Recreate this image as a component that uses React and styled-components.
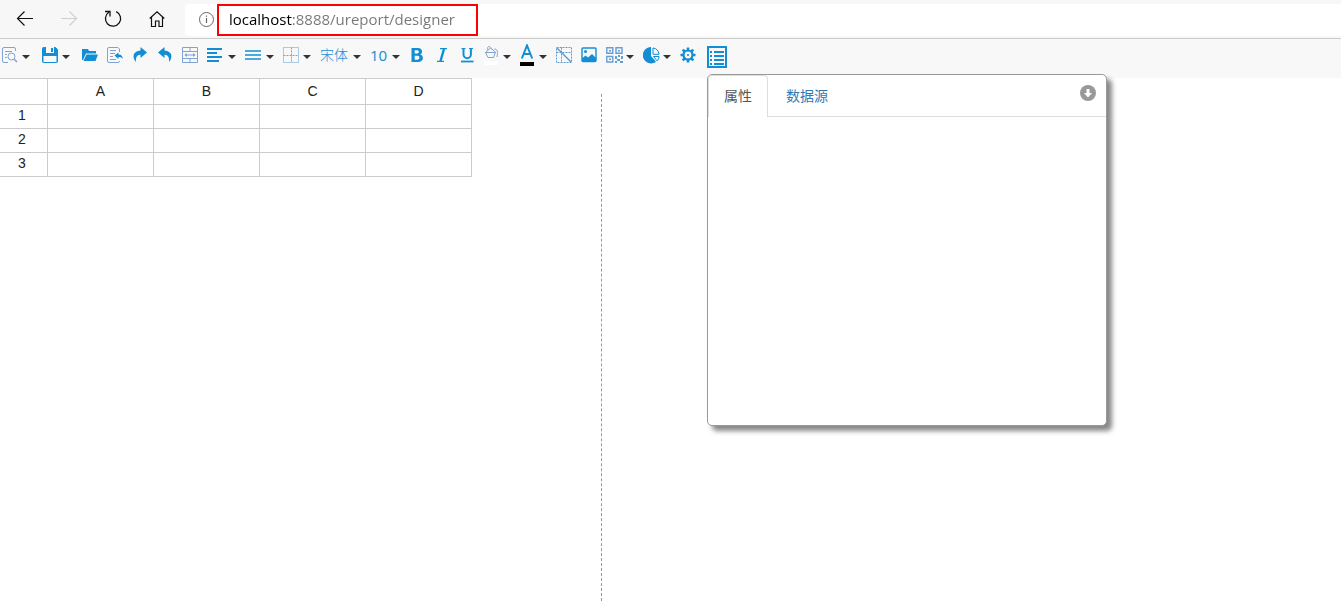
import styled, { createGlobalStyle } from "styled-components";

const blue = "#118ed4";
const pale = "#7ea3d4";
const line = "#cccccc";

const GlobalStyle = createGlobalStyle`
  * {
    box-sizing: border-box;
  }
  body {
    margin: 0;
    background: #fff;
    color: #333;
    font: 14px/20px "Liberation Sans", "Noto Sans CJK SC", sans-serif;
  }
  button, input {
    font: inherit;
    color: inherit;
    border: 0;
    padding: 0;
    background: none;
  }
  button {
    cursor: pointer;
  }
  svg {
    display: block;
  }
`;

const Page = styled.div`
  display: flex;
  flex-direction: column;
  min-height: 100vh;
`;

const BrowserBar = styled.header`
  display: flex;
  align-items: center;
  padding: 4px 0 2px;
  background: #f7f7f7;
  border-bottom: 1px solid ${line};
`;
const NavButtons = styled.nav`
  display: flex;
  gap: 24px;
  padding: 0 18px 2px 15px;
`;
const NavButton = styled.button`
  width: 20px;
  height: 20px;
  color: ${(props) => (props.disabled ? "#cfcfcf" : "#111")};
`;
const AddressBar = styled.div`
  flex: 1;
  display: flex;
  align-items: center;
  height: 32px;
  padding-left: 13px;
  background: #fff;
  border-radius: 4px 0 0 4px;
`;
const InfoButton = styled.button`
  width: 17px;
  height: 17px;
  margin-bottom: 2px;
  color: #666;
`;
const AddressInput = styled.input`
  width: 261px;
  height: 32px;
  margin-left: 2px;
  padding: 0 12px 2px;
  font: 15px/22px "Open Sans", sans-serif;
  outline: 2px solid #f00;
  outline-offset: -2px;
  color: transparent;
  caret-color: #111;
  background: linear-gradient(90deg, #000 75px, #767676 75px);
  background-clip: text;
`;

const Toolbar = styled.div`
  display: flex;
  align-items: flex-start;
  gap: 9px;
  padding: 7px 2px 10px;
  background: #f8f8f8;
`;
const Tool = styled.button`
  flex: none;
  display: flex;
  align-items: center;
  justify-content: center;
  gap: ${(props) => props.$gap || 5}px;
  height: 18px;
  margin-right: ${(props) => (props.$wide ? 3 : 0)}px;
  color: ${blue};
  font-weight: 300;
`;
const PanelToggle = styled(Tool)`
  height: 22px;
  margin-left: 2px;
`;
const Caret = styled.span`
  margin-top: 3px;
  border: 4px solid transparent;
  border-top-color: #333;
  border-bottom: 0;
`;
const FontSize = styled.span`
  width: 17px;
  font: 15px/18px "Open Sans", sans-serif;
`;

const Workspace = styled.main`
  flex: 1;
  display: flex;
  position: relative;
`;
const Paper = styled.section`
  width: 602px;
  display: flex;
  align-items: flex-start;
  justify-content: space-between;
`;
const PageEdge = styled.div`
  align-self: stretch;
  margin-top: 16px;
  border-right: 1px dashed #999;
`;
const Sheet = styled.table`
  width: 472px;
  table-layout: fixed;
  border-collapse: separate;
  border-spacing: 0;
  border-top: 1px solid ${line};
  color: #222;

  th, td {
    height: 24px;
    padding: 0 0 3px;
    border-right: 1px solid ${line};
    border-bottom: 1px solid ${line};
    font-weight: normal;
    line-height: 18px;
  }
  thead th {
    height: 26px;
    padding-bottom: 1px;
  }
  thead th:first-child {
    width: 48px;
  }
  tbody th {
    padding-right: 3px;
  }
`;

const Panel = styled.aside`
  position: absolute;
  z-index: 2;
  top: -4px;
  left: 707px;
  width: 400px;
  height: 352px;
  background: #fff;
  border: 1px solid #999;
  border-radius: 5px;
  box-shadow: 5px 5px 5px #888;
`;
const PanelHead = styled.div`
  display: flex;
  align-items: flex-start;
  border-bottom: 1px solid #ddd;
`;
const Tabs = styled.div`
  flex: 1;
  display: flex;
  gap: 2px;
  margin-bottom: -1px;
`;
const Tab = styled.button`
  height: 42px;
  padding: 0 15px 2px;
  line-height: 20px;
  border: 1px solid transparent;
  border-bottom: 0;
  border-radius: 4px 4px 0 0;
  color: #337ab7;

  &[aria-selected="true"] {
    color: #555;
    background: #fff;
    border-color: #ddd;
  }
`;
const Collapse = styled.button`
  width: 16px;
  height: 16px;
  margin: 10px 10px 0 0;
`;

function Icon({ width = 16, height = 16, children, ...rest }) {
  return (
    <svg
      width={width}
      height={height}
      viewBox={`0 0 ${width} ${height}`}
      fill="none"
      stroke="currentColor"
      aria-hidden="true"
      {...rest}
    >
      {children}
    </svg>
  );
}

const icons = {
  back: (
    <Icon width={20} height={20}>
      <path d="M18 9.500H2.500M9.500 2.500l-7 7 7 7" strokeWidth="1.200" />
    </Icon>
  ),
  forward: (
    <Icon width={20} height={20}>
      <path d="M2 9.500h15.500M10.500 2.500l7 7-7 7" strokeWidth="1.200" />
    </Icon>
  ),
  reload: (
    <Icon width={20} height={20}>
      <path d="M13.200 2.700A7.600 7.600 0 1 1 5.800 3.300M2 2.500h5v5" strokeWidth="1.300" />
    </Icon>
  ),
  home: (
    <Icon width={20} height={20}>
      <path d="M2.700 9.500L10 2.700l7.300 6.800M4.500 8v9.500h4v-5.500h3.500v5.500h3.500V8" strokeWidth="1.200" />
    </Icon>
  ),
  info: (
    <Icon width={17} height={17}>
      <circle cx="8.500" cy="8.500" r="7" />
      <path d="M8.500 7v5M8.500 4.500v1.300" strokeWidth="1.200" />
    </Icon>
  ),
  preview: (
    <Icon stroke={pale}>
      <path d="M6 15.500H2A1.500 1.500 0 0 1 .5 14V2A1.500 1.500 0 0 1 2 .5h10A1.500 1.500 0 0 1 13.500 2v2M3 4.500h7M3 7.500h2M3 10.500h2" />
      <circle cx="9.500" cy="9.500" r="3.500" />
      <path d="M12 12l3 3" strokeWidth="1.500" />
    </Icon>
  ),
  save: (
    <Icon>
      <path d="M.5 1.500a1 1 0 0 1 1-1h12l2 2v12a1 1 0 0 1-1 1h-13a1 1 0 0 1-1-1z" fill="currentColor" />
      <path d="M4 0h8v6H4zM1.500 9h13v6h-13z" fill="#f8f8f8" stroke="none" />
      <path d="M9 1h2v4H9z" fill="currentColor" stroke="none" />
    </Icon>
  ),
  open: (
    <Icon fill="currentColor" stroke="none">
      <path d="M0 2h6l1 2h7v2.500H4L1 13H0zM4.500 7.500H16L13.500 14H1.500z" />
    </Icon>
  ),
  load: (
    <Icon stroke={pale}>
      <path d="M12.500 5V2L11 .5H2A1.500 1.500 0 0 0 .5 2v12A1.500 1.500 0 0 0 2 15.500h9a1.500 1.500 0 0 0 1.500-1.500M3 3.500h6M3 6.500h5M3 9.500h3M3 12.500h6" />
      <path d="M7.500 8.500l4-3v2c3 0 4 2 4.500 4.500-1-1.500-2.500-2-4.500-2v2z" fill={blue} stroke="none" />
    </Icon>
  ),
  redo: (
    <Icon fill="currentColor" stroke="none">
      <path d="M8.500 0L15 5.500 8.500 11V7.700C5 7.500 3.500 10.500 4 15 0 10.500.5 4 8.500 3.500z" />
    </Icon>
  ),
  undo: (
    <Icon fill="currentColor" stroke="none">
      <path d="M7.500 0L1 5.500 7.500 11V7.700c3.500-.2 5 2.800 4.500 7.300 4-4.500 3.500-11-4.500-11.500z" />
    </Icon>
  ),
  merge: (
    <Icon stroke={pale}>
      <path d="M.5.500h15v15H.5zM.5 4.500h15M.5 11.500h15M8 .5v4M8 11.500v4M3 8h10" />
      <path d="M5 6L2.500 8 5 10zM11 6l2.500 2-2.500 2z" fill={pale} stroke="none" />
    </Icon>
  ),
  align: (
    <Icon fill="currentColor" stroke="none">
      <path d="M0 1h15v2H0zM0 5h10v2H0zM0 9h15v2H0zM0 13h12v2H0z" />
    </Icon>
  ),
  lines: (
    <Icon>
      <path d="M0 4h16M0 8h16M0 12h16" strokeWidth="1.700" />
    </Icon>
  ),
  border: (
    <Icon stroke="#5b9bd3">
      <path d="M.5.500h15v15H.5z" strokeDasharray="1 1" />
      <path d="M.5 8.500h15M8.500.500v15" stroke={pale} strokeDasharray="2 1" />
    </Icon>
  ),
  bold: (
    <Icon>
      <path
        d="M2.500 1H9c5 0 5 5.500 2.200 6.500 4 1 3.800 7.500-2.200 7.500H2.500zM5.700 3.300v3.200h2.500c2.200 0 2.200-3.200 0-3.200zM5.700 8.800v3.900h2.800c2.500 0 2.500-3.900 0-3.900z"
        fill="currentColor"
        fillRule="evenodd"
        stroke="none"
      />
    </Icon>
  ),
  italic: (
    <Icon>
      <path d="M6 1.700h7M3 14.300h7" strokeWidth="1.300" />
      <path d="M10 2L6.500 14" strokeWidth="2.400" />
    </Icon>
  ),
  underline: (
    <Icon>
      <path d="M4.500 1v6.500a3.700 3.700 0 0 0 7.400 0V1" strokeWidth="2" />
      <path d="M2.500 1.500h4M10 1.500h4" />
      <path d="M2 14.500h12.500" strokeWidth="1.800" />
    </Icon>
  ),
  fill: (
    <Icon width={15} height={22} stroke={pale}>
      <path d="M1.500 8.500l5-4.500 5 4-2 5.500H4zM1.500 8.500h10M4 6C2.500 2 6 1 7.500 5M10.500 5c3 0 3.500 3 2.500 8" />
      <path d="M0 17h14v4H0z" fill="#fff" stroke="none" />
    </Icon>
  ),
  color: (
    <Icon width={14} height={22}>
      <path d="M1.800 14.500L7 1.500l5.200 13M4 10h6" strokeWidth="2" />
      <path d="M0 18h14v4H0z" fill="#000" stroke="none" />
    </Icon>
  ),
  slash: (
    <Icon stroke="#5b9bd3">
      <path d="M.5.500h15v15H.5zM.5 5.500h15M5.500.500v15" strokeDasharray="2 1" />
      <path d="M1 1l14 14" strokeWidth="1.400" />
    </Icon>
  ),
  image: (
    <Icon>
      <rect x="1" y="1" width="14" height="13.500" rx="1" strokeWidth="1.400" />
      <path d="M1 11.500l3.500-3L7 10.500 11 7l4 4v3.500H1z" fill="currentColor" stroke="none" />
      <circle cx="4.500" cy="4.500" r="1.500" fill="currentColor" stroke="none" />
    </Icon>
  ),
  qr: (
    <Icon width={17} height={16} stroke="#689fd3">
      <path d="M.8.800h6v5.500h-6zM10 .8h6v5.500h-6zM.8 9.500h6V15h-6z" strokeWidth="1.400" />
      <path d="M3 3h2v1.500H3zM12 3h2v1.500h-2zM3 11.500h2V13H3zM9 9h2v3H9zM12 8h2v2h-2zM15 9h2v3h-2zM11 12h3v2h-3zM9 14h2v2H9zM14 14h3v2h-3z" fill="#689fd3" stroke="none" />
    </Icon>
  ),
  chart: (
    <Icon width={17} height={17}>
      <path d="M8 0a8.200 8.200 0 1 0 5 14.700L8 9z" fill="currentColor" stroke="none" />
      <path d="M10 1a7 7 0 0 1 6 6.300H10zM10.500 9.500H16c0 1.800-.8 3.300-2 4.300z" strokeWidth="1" />
    </Icon>
  ),
  gear: (
    <Icon>
      <circle cx="8" cy="8" r="4.500" strokeWidth="2.200" />
      <circle cx="8" cy="8" r="1" fill="currentColor" stroke="none" />
      <path d="M8 .5v3M8 12.500v3M.5 8h3M12.500 8h3M2.700 2.700l2 2M11.300 11.300l2 2M2.700 13.300l2-2M11.300 4.700l2-2" strokeWidth="2.600" />
    </Icon>
  ),
  panel: (
    <Icon width={20} height={22}>
      <rect x="1" y="1" width="18" height="20" strokeWidth="2" />
      <path d="M3 6h2M7 6h10M3 10h2M7 10h10M3 14h2M7 14h10M3 18h2M7 18h10" strokeWidth="1.800" />
    </Icon>
  ),
  down: (
    <Icon stroke="none">
      <circle cx="8" cy="8" r="8" fill="#999" />
      <path d="M6.500 4h3v4H12l-4 4.500L4 8h2.500z" fill="#fff" />
    </Icon>
  ),
};

const tools = [
  { label: "预览", icon: icons.preview, menu: true, gap: 4, wide: true },
  { label: "保存", icon: icons.save, menu: true, gap: 4, wide: true },
  { label: "打开", icon: icons.open },
  { label: "导入", icon: icons.load },
  { label: "重做", icon: icons.redo },
  { label: "撤消", icon: icons.undo },
  { label: "合并单元格", icon: icons.merge },
  { label: "对齐方式", icon: icons.align, menu: true },
  { label: "行对齐", icon: icons.lines, menu: true },
  { label: "边框", icon: icons.border, menu: true, gap: 4 },
  { label: "字体", icon: "宋体", menu: true },
  { label: "字号", icon: <FontSize>10</FontSize>, menu: true },
  { label: "加粗", icon: icons.bold },
  { label: "斜体", icon: icons.italic },
  { label: "下划线", icon: icons.underline },
  { label: "背景色", icon: icons.fill, menu: true, gap: 4 },
  { label: "前景色", icon: icons.color, menu: true },
  { label: "斜表头", icon: icons.slash },
  { label: "图片", icon: icons.image },
  { label: "二维码", icon: icons.qr, menu: true, gap: 3 },
  { label: "图表", icon: icons.chart, menu: true, gap: 3 },
  { label: "设置", icon: icons.gear },
];

const columns = ["A", "B", "C", "D"];
const rows = [1, 2, 3];

export default function App() {
  return (
    <Page>
      <GlobalStyle />
      <BrowserBar>
        <NavButtons>
          <NavButton aria-label="Back">{icons.back}</NavButton>
          <NavButton aria-label="Forward" disabled>
            {icons.forward}
          </NavButton>
          <NavButton aria-label="Reload">{icons.reload}</NavButton>
          <NavButton aria-label="Home">{icons.home}</NavButton>
        </NavButtons>
        <AddressBar>
          <InfoButton aria-label="Site information">{icons.info}</InfoButton>
          <AddressInput
            aria-label="Address"
            spellCheck={false}
            defaultValue="localhost:8888/ureport/designer"
          />
        </AddressBar>
      </BrowserBar>
      <Toolbar role="toolbar">
        {tools.map((tool) => (
          <Tool
            key={tool.label}
            aria-label={tool.label}
            aria-haspopup={tool.menu ? "menu" : undefined}
            $gap={tool.gap}
            $wide={tool.wide}
          >
            {tool.icon}
            {tool.menu && <Caret />}
          </Tool>
        ))}
        <PanelToggle aria-label="属性面板">{icons.panel}</PanelToggle>
      </Toolbar>
      <Workspace>
        <Paper>
          <Sheet>
            <thead>
              <tr>
                <th />
                {columns.map((name) => (
                  <th key={name} scope="col">
                    {name}
                  </th>
                ))}
              </tr>
            </thead>
            <tbody>
              {rows.map((row) => (
                <tr key={row}>
                  <th scope="row">{row}</th>
                  {columns.map((name) => (
                    <td key={name} />
                  ))}
                </tr>
              ))}
            </tbody>
          </Sheet>
          <PageEdge />
        </Paper>
        <Panel>
          <PanelHead>
            <Tabs role="tablist">
              <Tab role="tab" aria-selected="true">
                属性
              </Tab>
              <Tab role="tab" aria-selected="false">
                数据源
              </Tab>
            </Tabs>
            <Collapse aria-label="收起">{icons.down}</Collapse>
          </PanelHead>
        </Panel>
      </Workspace>
    </Page>
  );
}
